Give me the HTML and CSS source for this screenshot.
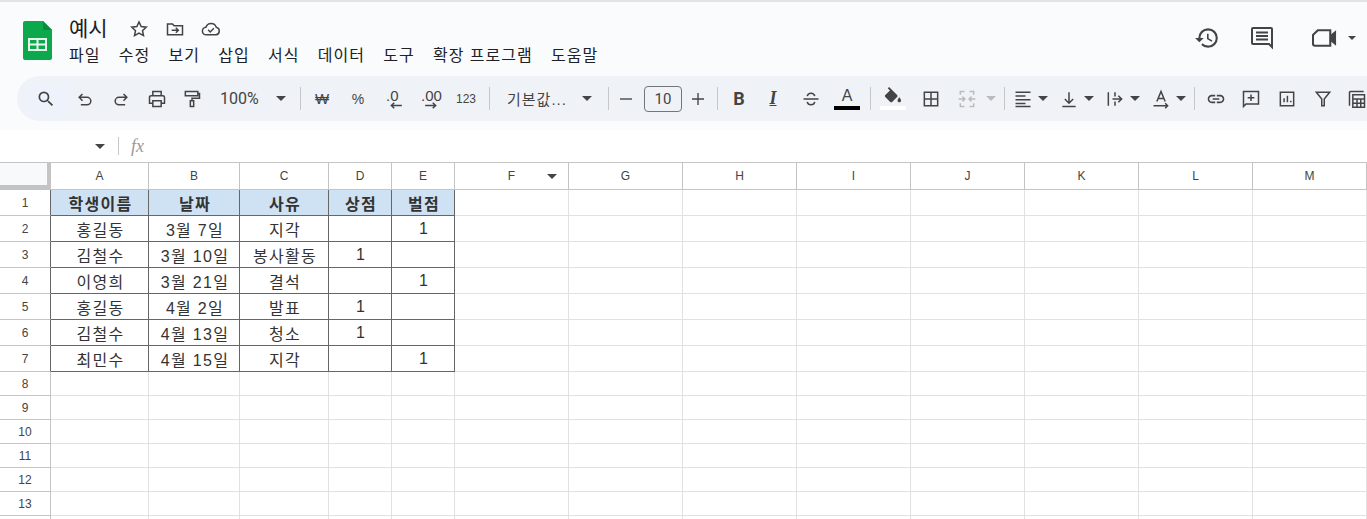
FILE: index.html
```html
<!DOCTYPE html>
<html lang="ko">
<head>
    <meta charset="UTF-8">
    <meta name="viewport" content="width=device-width, initial-scale=1.0">
    <title>예시 - Sheets</title>
    <link rel="stylesheet" href="styles.css">
</head>
<body>
    <header class="top">
        <div class="titlebar">
            <svg class="logo" viewBox="0 0 29 39">
                <path fill="#0ca84c" d="M2 0h18l9 9v28a2 2 0 0 1-2 2H2a2 2 0 0 1-2-2V2a2 2 0 0 1 2-2z"></path>
                <path fill="#0a8a3e" d="M20 0l9 9h-9z"></path>
                <path fill="none" stroke="#e8f5ec" stroke-width="2" d="M6 18h17v11H6zM6 23.500h17M14.500 18v11"></path>
            </svg>
            <div class="doc">
                <div class="doc-title">
                    <span class="name">예시</span>
                    <svg class="doc-ico" viewBox="0 0 24 24"><path d="M12 3.500l2.600 5.600 6.100.7-4.500 4.200 1.200 6L12 17l-5.400 3 1.200-6-4.500-4.200 6.100-.7z"></path></svg>
                    <svg class="doc-ico" viewBox="0 0 24 24"><path d="M3 6h6l2 2h10v11H3zM3 6v4M8 13.500h8M13 10.500l3 3-3 3"></path></svg>
                    <svg class="doc-ico cloud" viewBox="0 0 24 24"><path d="M6.500 19a4.500 4.500 0 0 1-.6-9A6.500 6.500 0 0 1 18.300 9.800 4.700 4.700 0 0 1 18 19zM8.500 13l2.500 2.500 4.500-4.500"></path></svg>
                </div>
                <nav class="menu">
                    <span>파일</span><span>수정</span><span>보기</span><span>삽입</span><span>서식</span><span>데이터</span><span>도구</span><span>확장 프로그램</span><span>도움말</span>
                </nav>
            </div>
            <div class="actions">
                <svg class="act history" viewBox="0 0 24 24"><path fill="#444" d="M13 3a9 9 0 0 0-9 9H1l3.890 3.890.07.14L9 12H6c0-3.870 3.130-7 7-7s7 3.130 7 7-3.130 7-7 7c-1.930 0-3.680-.79-4.940-2.060l-1.420 1.420A8.954 8.954 0 0 0 13 21a9 9 0 0 0 0-18zm-1 5v5l4.280 2.540.72-1.210-3.500-2.080V8H12z"></path></svg>
                <svg class="act comment" viewBox="0 0 24 24"><path fill="none" stroke="#444" stroke-width="2" d="M3 2h18a1 1 0 0 1 1 1v18l-3-3H3a1 1 0 0 1-1-1V3a1 1 0 0 1 1-1z"></path><path fill="none" stroke="#444" stroke-width="2" d="M6 6.500h12M6 10h12M6 13.500h12"></path></svg>
                <svg class="act video" viewBox="0 0 26 20"><path fill="none" stroke="#444" stroke-width="2.200" d="M6 2h13v16H3a2 2 0 0 1-2-2V7z"></path><path fill="#444" d="M19 7l6-5v16l-6-5z"></path></svg>
                <span class="arrow"></span>
            </div>
        </div>

        <div class="toolbar">
            <!-- column widths are in styles.css, one per item here -->
            <div class="tb search"><svg viewBox="0 0 24 24"><path class="fill" d="M15.500 14h-.79l-.28-.27A6.471 6.471 0 0 0 16 9.500 6.500 6.500 0 1 0 9.500 16c1.610 0 3.090-.59 4.230-1.570l.27.28v.79l5 4.990L20.490 19l-4.990-5zm-6 0C7.010 14 5 11.990 5 9.500S7.010 5 9.500 5 14 7.010 14 9.500 11.990 14 9.500 14z"></path></svg></div>
            <div class="tb"><svg viewBox="0 0 24 24"><path d="M9 6 5 10l4 4M5 10h9.500a4.500 4.500 0 0 1 0 9H7"></path></svg></div>
            <div class="tb"><svg viewBox="0 0 24 24"><path d="M15 6l4 4-4 4M19 10H9.500a4.500 4.500 0 0 0 0 9H17"></path></svg></div>
            <div class="tb"><svg viewBox="0 0 24 24"><path d="M7 8V3h10v5M7 17H3v-7a2 2 0 0 1 2-2h14a2 2 0 0 1 2 2v7h-4M7 14h10v7H7z"></path></svg></div>
            <div class="tb"><svg viewBox="0 0 24 24"><path d="M4 3h15v5H4zM19 5.500h2v5.500h-9v3M10 14h4v7h-4z"></path></svg></div>
            <div class="tb txt zoom">100%</div>
            <div class="tb"><span class="arrow"></span></div>
            <div class="tb"><span class="sep"></span></div>
            <div class="tb txt">₩</div>
            <div class="tb txt pct">%</div>
            <div class="tb stack"><span>.0</span><svg viewBox="0 0 12 6"><path d="M11 3H2M4.500 .6 2 3l2.500 2.400"></path></svg></div>
            <div class="tb stack"><span>.00</span><svg viewBox="0 0 12 6"><path d="M1 3h9M7.500 .6 10 3 7.500 5.400"></path></svg></div>
            <div class="tb txt num">123</div>
            <div class="tb"><span class="sep"></span></div>
            <div class="tb txt font">기본값...</div>
            <div class="tb"><span class="arrow"></span></div>
            <div class="tb"><span class="sep"></span></div>
            <div class="tb"><svg class="sm" viewBox="0 0 24 24"><path d="M4 12h16"></path></svg></div>
            <div class="tb"><div class="size">10</div></div>
            <div class="tb"><svg class="sm" viewBox="0 0 24 24"><path d="M4 12h16M12 4v16"></path></svg></div>
            <div class="tb"><span class="sep"></span></div>
            <div class="tb txt bold">B</div>
            <div class="tb txt ital">I</div>
            <div class="tb"><svg viewBox="0 0 24 24"><path d="M3 12h18M7.500 8.500C8 6 10 5 12 5s4 1 4.500 3.500M16.500 15.500C16 18 14 19 12 19s-4-1-4.500-3.500"></path></svg></div>
            <div class="tb color"><span>A</span><i class="bar black"></i></div>
            <div class="tb"><span class="sep"></span></div>
            <div class="tb color"><svg class="bucket" viewBox="0 0 24 20"><path class="fill" d="M16.560 8.940 7.620 0 6.210 1.410l2.380 2.380-5.150 5.150c-.59.59-.59 1.540 0 2.120l5.500 5.500c.29.29.68.44 1.060.44s.77-.15 1.060-.44l5.500-5.500c.59-.58.59-1.530 0-2.120zM19 11.500s-2 2.170-2 3.500c0 1.100.9 2 2 2s2-.9 2-2c0-1.330-2-3.500-2-3.500z"></path></svg><i class="bar white"></i></div>
            <div class="tb"><svg viewBox="0 0 24 24"><path d="M4 4h16v16H4zM12 4v16M4 12h16"></path></svg></div>
            <div class="tb off"><svg viewBox="0 0 24 24"><path d="M9 3H4v4M15 3h5v4M20 17v4h-5M9 21H4v-4M2 12h7M6.500 9 9.500 12l-3 3M22 12h-7M17.500 9 14.500 12l3 3"></path></svg></div>
            <div class="tb"><span class="arrow dim"></span></div>
            <div class="tb"><span class="sep"></span></div>
            <div class="tb pair"><svg viewBox="0 0 24 24"><path d="M3 4h18M3 8.500h12M3 13h18M3 17.500h12M3 21h18"></path></svg><span class="cell-arrow"><span class="arrow"></span></span></div>
            <div class="tb pair"><svg viewBox="0 0 24 24"><path d="M4 21h16M12 4v13M7 12l5 5 5-5"></path></svg><span class="cell-arrow"><span class="arrow"></span></span></div>
            <div class="tb pair"><svg viewBox="0 0 24 24"><path d="M4 4v16M9 12h11M16 8l4 4-4 4M12 4v5M12 15v5"></path></svg><span class="cell-arrow"><span class="arrow"></span></span></div>
            <div class="tb pair"><svg viewBox="0 0 24 24"><path d="M7 15 12 3l5 12M8.500 11.500h7M3 20h17M17 17l3 3-3 3"></path></svg><span class="cell-arrow"><span class="arrow"></span></span></div>
            <div class="tb"><span class="sep"></span></div>
            <div class="tb"><svg viewBox="0 0 24 24"><path class="fill" d="M3.900 12c0-1.710 1.390-3.100 3.100-3.100h4V7H7c-2.760 0-5 2.240-5 5s2.240 5 5 5h4v-1.900H7c-1.710 0-3.100-1.390-3.100-3.100zM8 13h8v-2H8v2zm9-6h-4v1.900h4c1.710 0 3.100 1.390 3.100 3.100s-1.390 3.100-3.100 3.100h-4V17h4c2.760 0 5-2.240 5-5s-2.240-5-5-5z"></path></svg></div>
            <div class="tb"><svg viewBox="0 0 24 24"><path d="M3 3h18v15H6l-3 3zM12 6.500v8M8 10.500h8"></path></svg></div>
            <div class="tb"><svg viewBox="0 0 24 24"><path d="M4 4h16v16H4zM8.500 16v-5M12.500 16V8M16.500 16v-2"></path></svg></div>
            <div class="tb"><svg viewBox="0 0 24 24"><path d="M4 4h16l-6.500 8v8h-3v-8z"></path></svg></div>
            <div class="tb"><svg viewBox="0 0 24 24"><path d="M3 20V4a1 1 0 0 1 1-1h16M7 7h14v15H7zM7 12h14M7 17h14M12 12v10M16.500 12v10"></path></svg></div>
        </div>
    </header>

    <div class="formula">
        <span class="arrow"></span>
        <span class="sep"></span>
        <span class="fx">fx</span>
    </div>

    <table class="sheet">
        <colgroup>
            <col class="c-row"><col class="c-a"><col class="c-b"><col class="c-c"><col class="c-d"><col class="c-e">
            <col class="c-x"><col class="c-x"><col class="c-x"><col class="c-x"><col class="c-x"><col class="c-x"><col class="c-x"><col class="c-x">
        </colgroup>
        <thead>
            <tr>
                <th class="corner"></th>
                <th>A</th><th>B</th><th>C</th><th>D</th><th>E</th>
                <th class="has-menu">F<span class="arrow"></span></th>
                <th>G</th><th>H</th><th>I</th><th>J</th><th>K</th><th>L</th><th>M</th>
            </tr>
        </thead>
        <tbody>
            <tr class="tall">
                <th class="dk">1</th>
                <td class="head">학생이름</td><td class="head">날짜</td><td class="head">사유</td><td class="head">상점</td><td class="head">벌점</td>
                <td></td><td></td><td></td><td></td><td></td><td></td><td></td><td></td>
            </tr>
            <tr class="tall">
                <th class="dk">2</th>
                <td class="box">홍길동</td><td class="box">3월 7일</td><td class="box">지각</td><td class="box"></td><td class="box">1</td>
                <td></td><td></td><td></td><td></td><td></td><td></td><td></td><td></td>
            </tr>
            <tr class="tall">
                <th class="dk">3</th>
                <td class="box">김철수</td><td class="box">3월 10일</td><td class="box">봉사활동</td><td class="box">1</td><td class="box"></td>
                <td></td><td></td><td></td><td></td><td></td><td></td><td></td><td></td>
            </tr>
            <tr class="tall">
                <th class="dk">4</th>
                <td class="box">이영희</td><td class="box">3월 21일</td><td class="box">결석</td><td class="box"></td><td class="box">1</td>
                <td></td><td></td><td></td><td></td><td></td><td></td><td></td><td></td>
            </tr>
            <tr class="tall">
                <th class="dk">5</th>
                <td class="box">홍길동</td><td class="box">4월 2일</td><td class="box">발표</td><td class="box">1</td><td class="box"></td>
                <td></td><td></td><td></td><td></td><td></td><td></td><td></td><td></td>
            </tr>
            <tr class="tall">
                <th class="dk">6</th>
                <td class="box">김철수</td><td class="box">4월 13일</td><td class="box">청소</td><td class="box">1</td><td class="box"></td>
                <td></td><td></td><td></td><td></td><td></td><td></td><td></td><td></td>
            </tr>
            <tr class="tall">
                <th class="dk">7</th>
                <td class="box">최민수</td><td class="box">4월 15일</td><td class="box">지각</td><td class="box"></td><td class="box">1</td>
                <td></td><td></td><td></td><td></td><td></td><td></td><td></td><td></td>
            </tr>
            <tr><th>8</th><td></td><td></td><td></td><td></td><td></td><td></td><td></td><td></td><td></td><td></td><td></td><td></td><td></td></tr>
            <tr><th>9</th><td></td><td></td><td></td><td></td><td></td><td></td><td></td><td></td><td></td><td></td><td></td><td></td><td></td></tr>
            <tr><th>10</th><td></td><td></td><td></td><td></td><td></td><td></td><td></td><td></td><td></td><td></td><td></td><td></td><td></td></tr>
            <tr><th>11</th><td></td><td></td><td></td><td></td><td></td><td></td><td></td><td></td><td></td><td></td><td></td><td></td><td></td></tr>
            <tr><th>12</th><td></td><td></td><td></td><td></td><td></td><td></td><td></td><td></td><td></td><td></td><td></td><td></td><td></td></tr>
            <tr><th>13</th><td></td><td></td><td></td><td></td><td></td><td></td><td></td><td></td><td></td><td></td><td></td><td></td><td></td></tr>
            <tr><th></th><td></td><td></td><td></td><td></td><td></td><td></td><td></td><td></td><td></td><td></td><td></td><td></td><td></td></tr>
        </tbody>
    </table>
</body>
</html>
```

FILE: styles.css
```css
* {
    margin: 0;
    padding: 0;
    box-sizing: border-box;
    font-family: "Liberation Sans", "Noto Sans CJK KR", sans-serif;
}

html, body {
    height: 100%;
    overflow: hidden;
}

body {
    background-color: #fff;
    border-top: 2px solid #e4e4e4;
    color: #202124;
}

.arrow {
    display: block;
    width: 0;
    height: 0;
    border-left: 5px solid transparent;
    border-right: 5px solid transparent;
    border-top: 5px solid #444;
}

.arrow.dim {
    border-top-color: #bbb;
}

.sep {
    display: block;
    width: 1px;
    height: 23px;
    background-color: #c7c7c7;
}

/* top area */
.top {
    background-color: #f9fbfd;
    height: 128px;
}

.titlebar {
    display: flex;
    height: 74px;
    padding: 19px 0 0 23px;
}

.logo {
    width: 29px;
    height: 39px;
    flex-shrink: 0;
}

.doc {
    margin-left: 17px;
    margin-top: -8px;
}

.doc-title {
    display: flex;
    align-items: center;
    height: 28px;
}

.name {
    font-size: 21px;
    width: 60px;
}

.doc-ico {
    width: 20px;
    height: 20px;
    margin-top: 4px;
    margin-right: 16px;
    fill: none;
    stroke: #444;
    stroke-width: 1.8;
}

.menu {
    display: flex;
    gap: 18.3px;
    margin-top: 4px;
    font-size: 16px;
    letter-spacing: 1px;
    line-height: 22px;
}

.actions {
    display: flex;
    align-items: center;
    margin-left: auto;
    height: 34px;
    padding-right: 11px;
}

.act {
    display: block;
}

.history {
    width: 26px;
    height: 26px;
    margin-right: 30px;
}

.comment {
    width: 24px;
    height: 24px;
    margin-right: 38px;
}

.video {
    width: 25px;
    height: 20px;
    margin-right: 11px;
}

.actions .arrow {
    border-left-width: 4px;
    border-right-width: 4px;
    border-top-width: 4px;
}

/* one column per toolbar item */
.toolbar {
    display: grid;
    grid-template-columns:
        42px 36px 36px 36px 34px 57px 30px 8px 36px 36px 34px 40px 32px 15px
        73px 34px 9px 26px 48px 22px 17px 26px 42px 34px 38px 8px 38px 38px 34px 14px 12px
        46px 46px 46px 40px 12px 32px 38px 34px 38px 30px;
    align-items: center;
    justify-items: center;
    height: 45px;
    width: 1400px;
    margin-left: 17px;
    padding-left: 8px;
    background-color: #eff3f8;
    border-radius: 23px 0 0 23px;
}

.tb {
    display: flex;
    align-items: center;
    justify-content: center;
    color: #444;
    font-size: 15px;
}

.tb svg {
    width: 20px;
    height: 20px;
    fill: none;
    stroke: #444;
    stroke-width: 1.8;
}

.tb svg .fill {
    fill: #444;
    stroke: none;
}

.tb.search {
    width: 42px;
    height: 32px;
    background-color: #edf2fb;
}

.tb.off svg {
    stroke: #bbb;
}

.txt.zoom {
    font-family: Roboto, sans-serif;
    font-size: 16px;
    justify-self: start;
    margin-left: 11px;
}

.txt.pct {
    font-size: 14px;
}

.txt.num {
    font-size: 12px;
}

.txt.font {
    justify-self: start;
    margin-left: 10px;
    font-size: 15px;
    letter-spacing: 1px;
    white-space: nowrap;
}

.tb.stack {
    flex-direction: column;
    align-items: flex-start;
    line-height: 13px;
    font-size: 15px;
}

.stack span {
    padding-left: 3px;
}

.tb.stack svg {
    width: 14px;
    height: 7px;
    margin-left: 6px;
    stroke-width: 1.3;
}

.size {
    width: 38px;
    height: 26px;
    border: 1px solid #747775;
    border-radius: 4px;
    font-family: Roboto, sans-serif;
    font-size: 15px;
    line-height: 24px;
    text-align: center;
}

.tb svg.sm {
    width: 18px;
    height: 18px;
}

.bold {
    font-family: Roboto, sans-serif;
    font-size: 18px;
    font-weight: bold;
}

.ital {
    font-family: "Liberation Serif", serif;
    font-size: 18px;
    font-weight: bold;
    font-style: italic;
    text-decoration: underline;
}

.color {
    flex-direction: column;
    font-size: 16px;
    line-height: 18px;
}

.bar {
    display: block;
    width: 26px;
    height: 4px;
    margin-top: 1px;
}

.bar.black {
    background-color: #000;
}

.bar.white {
    background-color: #fff;
}

.tb svg.bucket {
    width: 22px;
    height: 18px;
}

.pair {
    justify-self: start;
    width: 46px;
    justify-content: flex-start;
    padding-left: 3px;
}

.cell-arrow {
    display: flex;
    justify-content: center;
    width: 20px;
}

/* formula bar */
.formula {
    display: flex;
    align-items: center;
    height: 32px;
    padding-left: 95px;
    background-color: #fff;
}

.formula .sep {
    height: 18px;
    margin-left: 13px;
}

.fx {
    margin-left: 12px;
    font-family: "Liberation Serif", serif;
    font-size: 18px;
    font-style: italic;
    color: #999;
}

/* sheet */
.sheet {
    table-layout: fixed;
    width: 1367px;
    border-collapse: separate;
    border-spacing: 0;
    border-top: 1px solid #c4c4c4;
    font-size: 16px;
    color: #333;
}

.c-row { width: 51px; }
.c-a { width: 98px; }
.c-b { width: 91px; }
.c-c { width: 89px; }
.c-d { width: 63px; }
.c-e { width: 63px; }
.c-x { width: 114px; }

.sheet thead tr {
    height: 27px;
}

.sheet tbody tr {
    height: 24px;
}

.sheet tbody tr.tall {
    height: 26px;
}

.sheet th {
    font-size: 12px;
    font-weight: normal;
    color: #444;
    background-color: #fff;
    border-right: 1px solid #c4c4c4;
    border-bottom: 1px solid #c4c4c4;
    position: relative;
}

.sheet th.dk {
    border-right-color: #666;
}

.sheet td {
    padding: 0 0 0 2px;
    text-align: center;
    border-right: 1px solid #e1e1e1;
    border-bottom: 1px solid #e1e1e1;
    white-space: nowrap;
    letter-spacing: 1.3px;
}

.sheet td.box, .sheet td.head {
    border-right-color: #666;
    border-bottom-color: #666;
}

.sheet td.head {
    background-color: #cfe2f3;
    font-weight: bold;
}

.sheet .corner {
    background-color: #f8f9fa;
    border-right: 4px solid #c4c4c4;
    border-bottom: 5px solid #c4c4c4;
}

.has-menu .arrow {
    position: absolute;
    right: 11px;
    top: 11px;
}
```
